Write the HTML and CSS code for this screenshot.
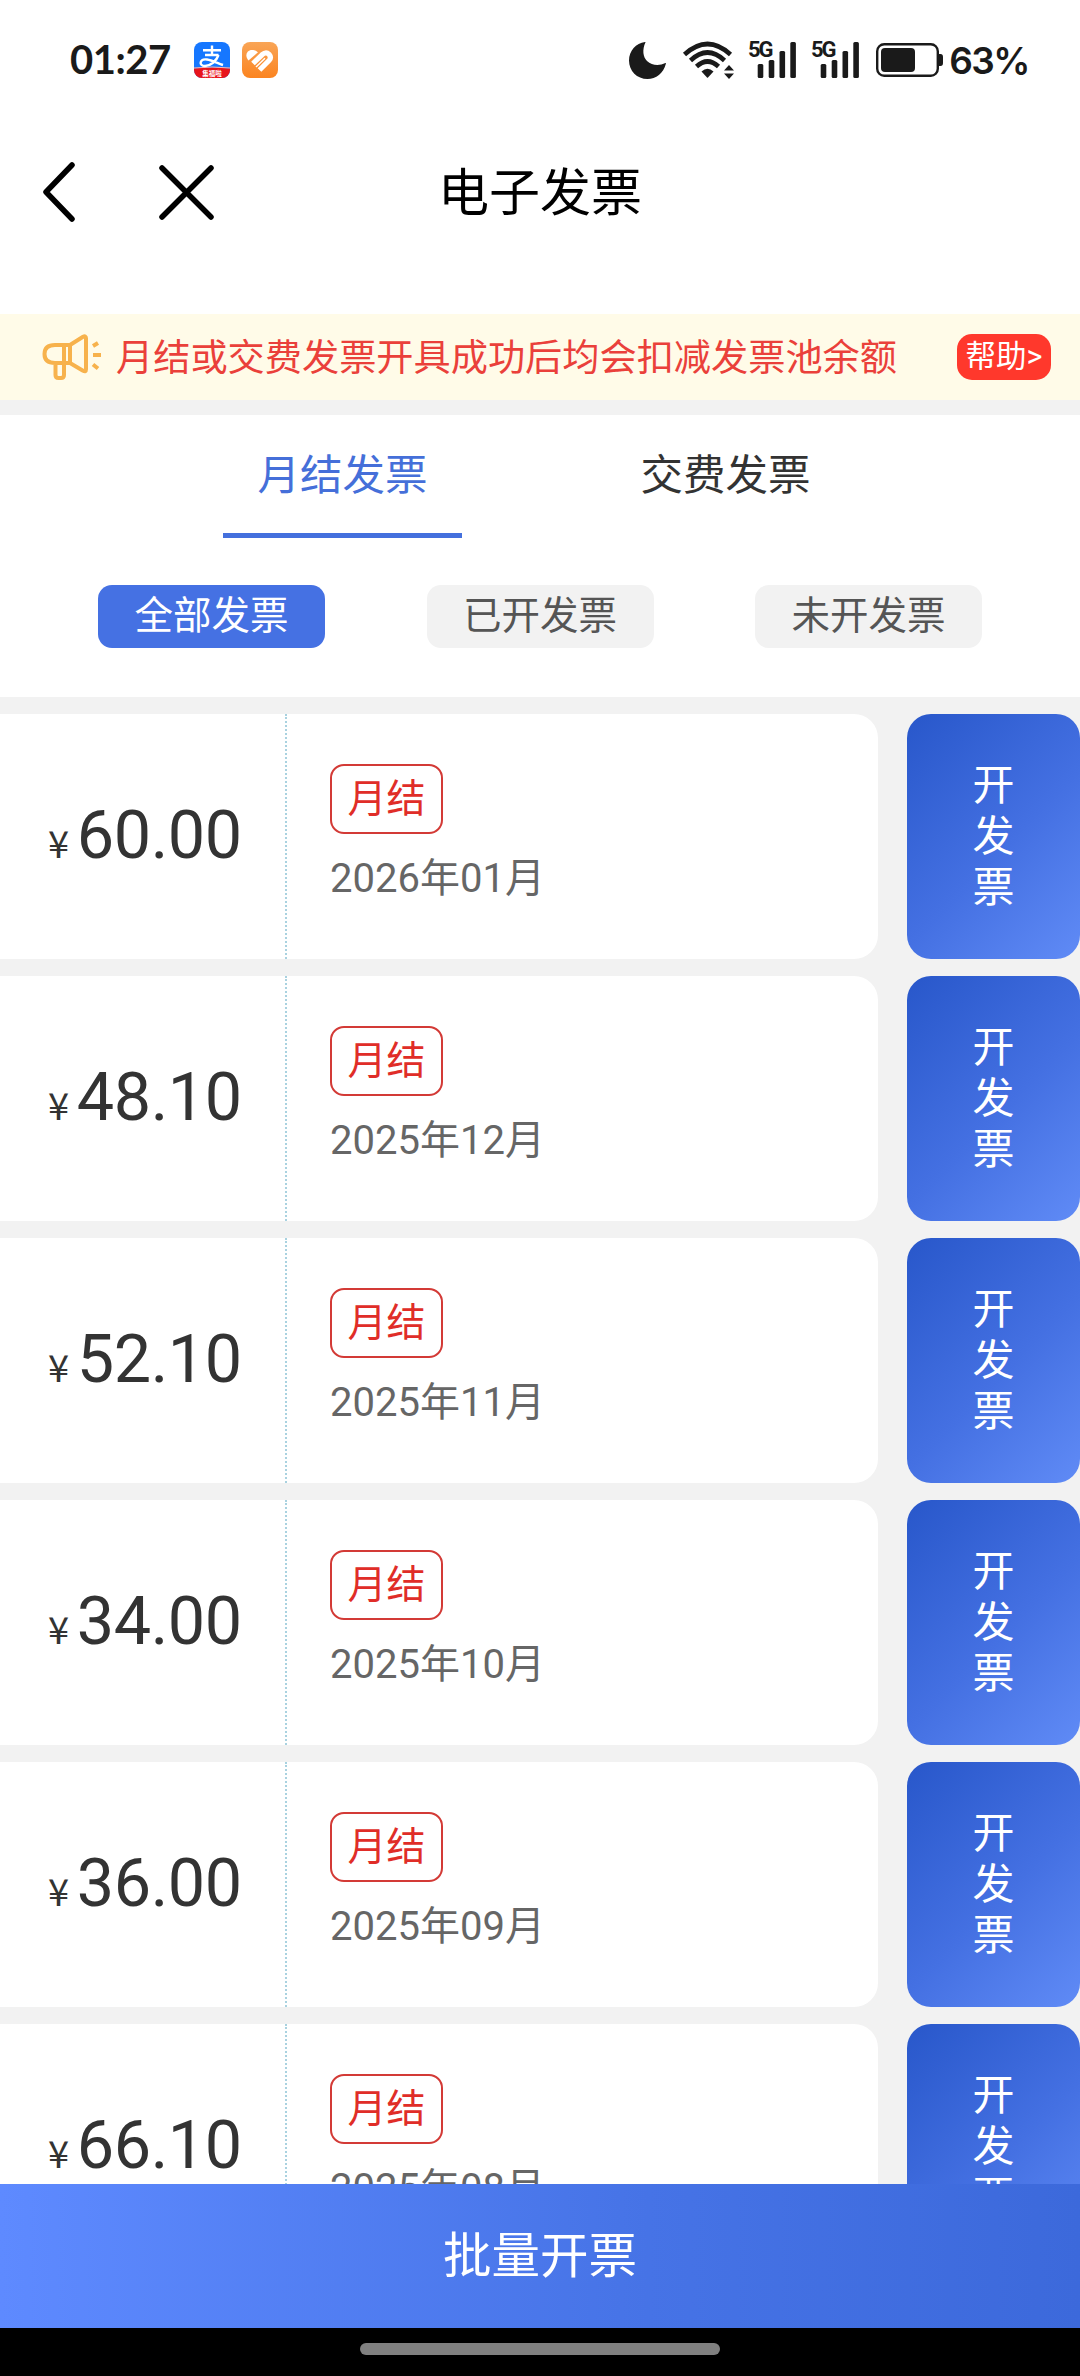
FILE: index.html
```html
<!DOCTYPE html>
<html lang="zh-CN">
<head>
  <meta charset="UTF-8" />
  <meta name="viewport" content="width=device-width, initial-scale=1.0" />
  <title>电子发票</title>
  <link rel="stylesheet" href="styles.css">
</head>
<body>

  <!-- 状态栏 -->
  <div class="status-bar">
    <span class="time">01:27</span>
    <svg class="app-icon" viewBox="0 0 36 36">
      <defs>
        <clipPath id="app-clip"><rect width="36" height="36" rx="8" /></clipPath>
        <linearGradient id="orange" x1="0" y1="0" x2="0" y2="1">
          <stop offset="0" stop-color="#f9a556" />
          <stop offset="1" stop-color="#fb8420" />
        </linearGradient>
      </defs>
      <g clip-path="url(#app-clip)">
        <rect width="36" height="36" fill="#1677ff" />
        <path d="M0 26.5Q18 24.5 36 26.5V36H0z" fill="#e8141c" />
        <path d="M0 26Q18 24 36 26" fill="none" stroke="#ffb9b0" stroke-width="1" />
      </g>
      <g fill="none" stroke="#fff" stroke-width="2.400">
        <path d="M9 8.300h18M18 3.600v9.400M11 13h13.500" />
        <path d="M24.500 13c-2 6-8 11-13.500 11-3.500 0-4.700-2-4.300-3.700.5-2 3-3.300 6.300-2.800 5 .8 10 3.500 16 5.500" />
      </g>
      <text x="18" y="33.500" class="app-label">集福啦</text>
    </svg>
    <svg class="app-icon" viewBox="0 0 36 36">
      <rect width="36" height="36" rx="8" fill="url(#orange)" />
      <path d="M6.500 18.500C2.500 14 4.500 8 10 8c3 0 4.500 1 6 2.200z" fill="#fff" />
      <path d="M11 21.500L20 12.800Q24 9.300 27 12.300 29.800 15.500 27 18.500L17.500 28" fill="none" stroke="#fff" stroke-width="5.200" />
      <path d="M14 25L23 16.200" fill="none" stroke="#fff" stroke-width="1.500" />
    </svg>

    <div class="status-right">
      <svg class="moon" viewBox="0 0 37 37">
        <path d="M16.500.3C13 8 14 15 18 19c5 4.500 12 5 18.500 2 .5 0 .5.500.3 1C34.500 31 27 37 18.500 37 8 37 0 29 0 18.500 0 9 7 1 16 .1c.5 0 .7 0 .5.200z" />
      </svg>
      <svg class="wifi" viewBox="0 0 52 37">
        <g fill="none" stroke="#1a1a1a" stroke-width="4.600">
          <path d="M1.500 12.500Q24.500-8.500 47.500 12.500" />
          <path d="M7.500 18.500Q24.500 2.500 41.500 18.500" />
          <path d="M13.500 24.500Q24.500 14.500 35.500 24.500" />
        </g>
        <path d="M18.500 29.500Q24.500 24 30.500 29.500L25 35.500q-.5.500-1 0z" />
        <path d="M41 28.500L46 23l5 5.500zM41 31.500h10L46 37z" />
      </svg>
      <svg class="signal" viewBox="0 0 48 37">
        <text x="0" y="15">5G</text>
        <rect x="9.700" y="22" width="5.600" height="14" rx="1.500" />
        <rect x="20.700" y="18" width="5.600" height="18" rx="1.500" />
        <rect x="31.500" y="9" width="5.600" height="27" rx="1.500" />
        <rect x="42.300" y="0" width="5.600" height="36" rx="1.500" />
      </svg>
      <svg class="signal" viewBox="0 0 48 37">
        <text x="0" y="15">5G</text>
        <rect x="9.700" y="22" width="5.600" height="14" rx="1.500" />
        <rect x="20.700" y="18" width="5.600" height="18" rx="1.500" />
        <rect x="31.500" y="9" width="5.600" height="27" rx="1.500" />
        <rect x="42.300" y="0" width="5.600" height="36" rx="1.500" />
      </svg>
      <svg class="battery" viewBox="0 0 67 34">
        <rect x="1.200" y="1.200" width="60.600" height="31.600" rx="7" fill="none" stroke="#1a1a1a" stroke-width="2.400" />
        <rect x="5" y="5" width="34" height="24" rx="4" />
        <path d="M63 11h1.500q2.500 0 2.500 3v6q0 3-2.500 3H63z" />
      </svg>
      <span class="percent">63%</span>
    </div>
  </div>

  <!-- 导航 -->
  <header class="nav">
    <svg class="back" viewBox="0 0 32 60"><path d="M29 3L3 30l26 27" /></svg>
    <svg class="close" viewBox="0 0 55 55"><path d="M3 3l49 49M52 3L3 52" /></svg>
    <h1>电子发票</h1>
  </header>

  <!-- 提示 -->
  <div class="notice">
    <svg class="horn" viewBox="0 0 58 45">
      <path d="M27 10L40 1.800q3-1.500 3 1.500v31q0 3-3 1.500L27 28H12Q1.500 28 1.500 19T12 10zM21 10v18M27 10v18M12.500 28v12q0 3 3 3h2.500q3 0 3-3V28" />
      <path d="M50 11l5-3M50 20h8M50 29.500l5 4" />
    </svg>
    <p>月结或交费发票开具成功后均会扣减发票池余额</p>
    <a class="help">帮助&gt;</a>
  </div>

  <div class="top">
    <div class="tabs">
      <div class="tab active">月结发票</div>
      <div class="tab">交费发票</div>
    </div>
    <div class="filters">
      <div class="filter active">全部发票</div>
      <div class="filter">已开发票</div>
      <div class="filter">未开发票</div>
    </div>
  </div>

  <!-- 发票列表 -->
  <div class="list">
    <div class="item">
      <div class="card">
        <div class="price"><span class="yen">¥</span>60.00</div>
        <div class="info"><span class="tag">月结</span><p class="date">2026年01月</p></div>
      </div>
      <div class="open">开<br>发<br>票</div>
    </div>
    <div class="item">
      <div class="card">
        <div class="price"><span class="yen">¥</span>48.10</div>
        <div class="info"><span class="tag">月结</span><p class="date">2025年12月</p></div>
      </div>
      <div class="open">开<br>发<br>票</div>
    </div>
    <div class="item">
      <div class="card">
        <div class="price"><span class="yen">¥</span>52.10</div>
        <div class="info"><span class="tag">月结</span><p class="date">2025年11月</p></div>
      </div>
      <div class="open">开<br>发<br>票</div>
    </div>
    <div class="item">
      <div class="card">
        <div class="price"><span class="yen">¥</span>34.00</div>
        <div class="info"><span class="tag">月结</span><p class="date">2025年10月</p></div>
      </div>
      <div class="open">开<br>发<br>票</div>
    </div>
    <div class="item">
      <div class="card">
        <div class="price"><span class="yen">¥</span>36.00</div>
        <div class="info"><span class="tag">月结</span><p class="date">2025年09月</p></div>
      </div>
      <div class="open">开<br>发<br>票</div>
    </div>
    <div class="item">
      <div class="card">
        <div class="price"><span class="yen">¥</span>66.10</div>
        <div class="info"><span class="tag">月结</span><p class="date">2025年08月</p></div>
      </div>
      <div class="open">开<br>发<br>票</div>
    </div>
  </div>

  <div class="batch">批量开票</div>
  <div class="home-bar"><i></i></div>

</body>
</html>
```

FILE: styles.css
```css
* { margin: 0; padding: 0; box-sizing: border-box; }

body {
  width: 1080px;
  height: 2376px;
  overflow: hidden;
  display: flex;
  flex-direction: column;
  background: #f2f2f2;
  color: #333;
  font-family: Roboto, "Noto Sans CJK SC", sans-serif;
}

body > * { flex-shrink: 0; }

/* 状态栏 */
.status-bar {
  height: 120px;
  padding: 0 51px 0 70px;
  display: flex;
  align-items: center;
  background: #fff;
  color: #1a1a1a;
}

.status-bar svg { fill: #1a1a1a; flex-shrink: 0; overflow: visible; }

.time {
  width: 124px;
  font: 700 40px/1 Lato, sans-serif;
  letter-spacing: -0.5px;
  padding-bottom: 2px;
}

.app-icon { width: 36px; height: 36px; margin-right: 12px; }

.status-bar .app-label {
  font: 700 6.5px "Noto Sans CJK SC", sans-serif;
  fill: #fff;
  text-anchor: middle;
}

.status-right {
  margin-left: auto;
  display: flex;
  align-items: center;
}

.moon { width: 37px; height: 37px; margin-right: 17px; }
.wifi { width: 52px; height: 37px; margin-right: 13px; }
.signal { width: 48px; height: 37px; margin-right: 15px; }
.signal text { font: 700 22px "Roboto", sans-serif; letter-spacing: -2px; }
.battery { width: 67px; height: 34px; margin: 0 6px 0 2px; }
.percent { font: 600 37px/1 Inter, sans-serif; letter-spacing: -1.5px; }

/* 导航 */
.nav {
  height: 194px;
  padding: 0 43px 50px;
  display: grid;
  grid-template-columns: 32px 55px 1fr;
  column-gap: 84px;
  align-items: center;
  background: #fff;
}

.nav svg { fill: none; stroke: #000; stroke-width: 5.5; stroke-linecap: round; stroke-linejoin: round; }
.back { width: 32px; height: 60px; }
.close { width: 55px; height: 55px; }

.nav h1 {
  padding: 0 0 7px 140px;
  font-size: 51px;
  font-weight: 400;
  color: #000;
}

/* 提示 */
.notice {
  height: 86px;
  padding: 0 29px 0 43px;
  display: flex;
  align-items: center;
  background: #fffbe8;
}

.horn { width: 58px; height: 45px; margin-right: 15px; fill: none; stroke: #f7b24c; stroke-width: 4; overflow: visible; }
.notice p { padding-top: 1px; font-size: 37.2px; line-height: 50px; color: #ea403a; white-space: nowrap; }

.help {
  margin-left: auto;
  width: 94px;
  height: 46px;
  border-radius: 15px;
  background: #ff382c;
  color: #fff;
  font-size: 30.5px;
  line-height: 45px;
  text-align: center;
}

.top {
  height: 282px;
  margin-top: 15px;
  background: #fff;
}

.tabs { display: flex; gap: 144px; padding-left: 223px; }

.tab {
  width: 239px;
  height: 123px;
  font-size: 42.5px;
  line-height: 121px;
  text-align: center;
}

.tab.active { color: #456fd9; border-bottom: 5px solid #4470dd; }

.filters { display: flex; justify-content: space-between; padding: 47px 98px 0; }

.filter {
  width: 227px;
  height: 63px;
  border-radius: 14px;
  background: #f2f2f2;
  color: #555;
  font-size: 38.5px;
  line-height: 62px;
  text-align: center;
}

.filter.active { background: #4571e3; color: #fff; }

/* 发票列表 */
.list {
  height: 1487px;
  padding-top: 17px;
  overflow: hidden;
}

.item { display: flex; justify-content: space-between; height: 245px; margin-bottom: 17px; }

.card {
  width: 878px;
  display: flex;
  border-radius: 0 24px 24px 0;
  background: #fff;
}

.price {
  width: 287px;
  border-right: 2px dotted #a9d2e0;
  padding: 81px 0 0 48px;
  font-size: 66.5px;
  line-height: 80px;
  letter-spacing: -0.4px;
  white-space: nowrap;
}

.yen { font-family: "Noto Sans CJK SC", sans-serif; font-size: 38px; line-height: 1; margin-right: 8px; }

.info { padding: 50px 0 0 43px; }

.tag {
  display: block;
  width: 113px;
  height: 70px;
  border: 2px solid #d33a36;
  border-radius: 14px;
  color: #e02d28;
  font-size: 39px;
  line-height: 66px;
  text-align: center;
}

.date { margin-top: 17px; font-size: 40px; line-height: 56px; color: #666; }

.open {
  width: 173px;
  padding-top: 46px;
  border-radius: 24px;
  background: linear-gradient(135deg, #2857ca, #4470e2 55%, #608bf6);
  color: #fff;
  font-size: 42px;
  line-height: 51px;
  text-align: center;
}

.batch {
  height: 144px;
  background: linear-gradient(90deg, #5e8aff, #4673e6 60%, #3c69db);
  color: #fff;
  font-size: 48.5px;
  line-height: 145px;
  text-align: center;
}

.home-bar { height: 48px; padding-top: 15px; background: #000; }
.home-bar i { display: block; width: 360px; height: 12px; margin: 0 auto; border-radius: 6px; background: #808080; }
```
